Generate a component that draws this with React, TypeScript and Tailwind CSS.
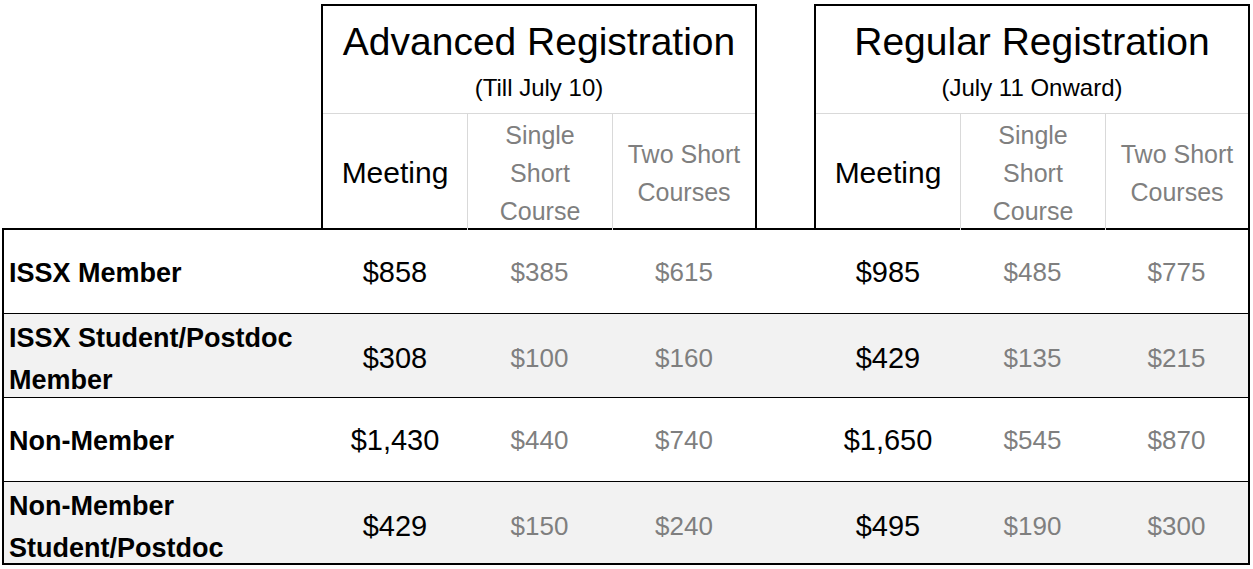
const rows = [
	{ label: [ 'ISSX Member' ], bg: 'bg-white', h: 'h-[83px]', adv: [ '$858', '$385', '$615' ], reg: [ '$985', '$485', '$775' ] },
	{ label: [ 'ISSX Student/Postdoc', 'Member' ], bg: 'bg-[#f2f2f2]', h: 'h-[84px]', adv: [ '$308', '$100', '$160' ], reg: [ '$429', '$135', '$215' ] },
	{ label: [ 'Non-Member' ], bg: 'bg-white', h: 'h-[84px]', adv: [ '$1,430', '$440', '$740' ], reg: [ '$1,650', '$545', '$870' ] },
	{ label: [ 'Non-Member', 'Student/Postdoc' ], bg: 'bg-[#f2f2f2]', h: 'h-[82px]', adv: [ '$429', '$150', '$240' ], reg: [ '$495', '$190', '$300' ] },
];

function HeaderBox( { title, sub }: { title: string; sub: string } ) {
	return (
		<div className="w-[436px] h-[224px] border-2 border-b-0 border-black flex flex-col">
			<div className="h-[108px] border-b border-[#d9d9d9] flex flex-col items-center pt-[13px]">
				<div className="text-[39px] leading-[46px] text-black">{ title }</div>
				<div className="text-[24px] leading-[28px] mt-[9px] text-black">{ sub }</div>
			</div>
			<div className="h-[114px] grid grid-cols-[144px_145px_143px]">
				<div className="flex items-center justify-center text-[30px] text-black pt-[1px]">Meeting</div>
				<div className="border-l border-[#d9d9d9] flex flex-col items-center justify-center text-[25px] leading-[38px] text-[#7f7f7f] pt-[2px]">
					<span>Single</span>
					<span>Short</span>
					<span>Course</span>
				</div>
				<div className="border-l border-[#d9d9d9] flex flex-col items-center justify-center text-[25px] leading-[38px] text-[#7f7f7f] pt-[2px]">
					<span>Two Short</span>
					<span>Courses</span>
				</div>
			</div>
		</div>
	);
}

function Prices( { values }: { values: string[] } ) {
	return (
		<>
			<div className="flex items-center justify-center text-[29px] text-black pt-[2px]">{ values[ 0 ] }</div>
			<div className="flex items-center justify-center text-[26px] text-[#7f7f7f] pt-[2px]">{ values[ 1 ] }</div>
			<div className="flex items-center justify-center text-[26px] text-[#7f7f7f] pt-[2px]">{ values[ 2 ] }</div>
		</>
	);
}

export default function App() {
	return (
		<div className="w-[1253px] h-[569px] bg-white pt-[4px] pl-[2px] font-['Liberation_Sans',Arial,sans-serif] overflow-hidden">
			<div className="flex">
				<div className="w-[319px]" />
				<HeaderBox title="Advanced Registration" sub="(Till July 10)" />
				<div className="w-[57px]" />
				<HeaderBox title="Regular Registration" sub="(July 11 Onward)" />
			</div>
			<div className="w-[1248px] border-2 border-black">
				{ rows.map( ( row, i ) => (
					<div
						key={ i }
						className={ `grid grid-cols-[319px_144px_145px_144px_60px_144px_145px_143px] ${ row.h } ${ row.bg } ${ i > 0 ? 'border-t border-black' : '' }` }
					>
						<div className="flex flex-col justify-center pl-[5px] pt-[3px] font-bold text-[27px] leading-[42px] text-black">
							{ row.label.map( ( l ) => (
								<span key={ l }>{ l }</span>
							) ) }
						</div>
						<Prices values={ row.adv } />
						<div />
						<Prices values={ row.reg } />
					</div>
				) ) }
			</div>
		</div>
	);
}
